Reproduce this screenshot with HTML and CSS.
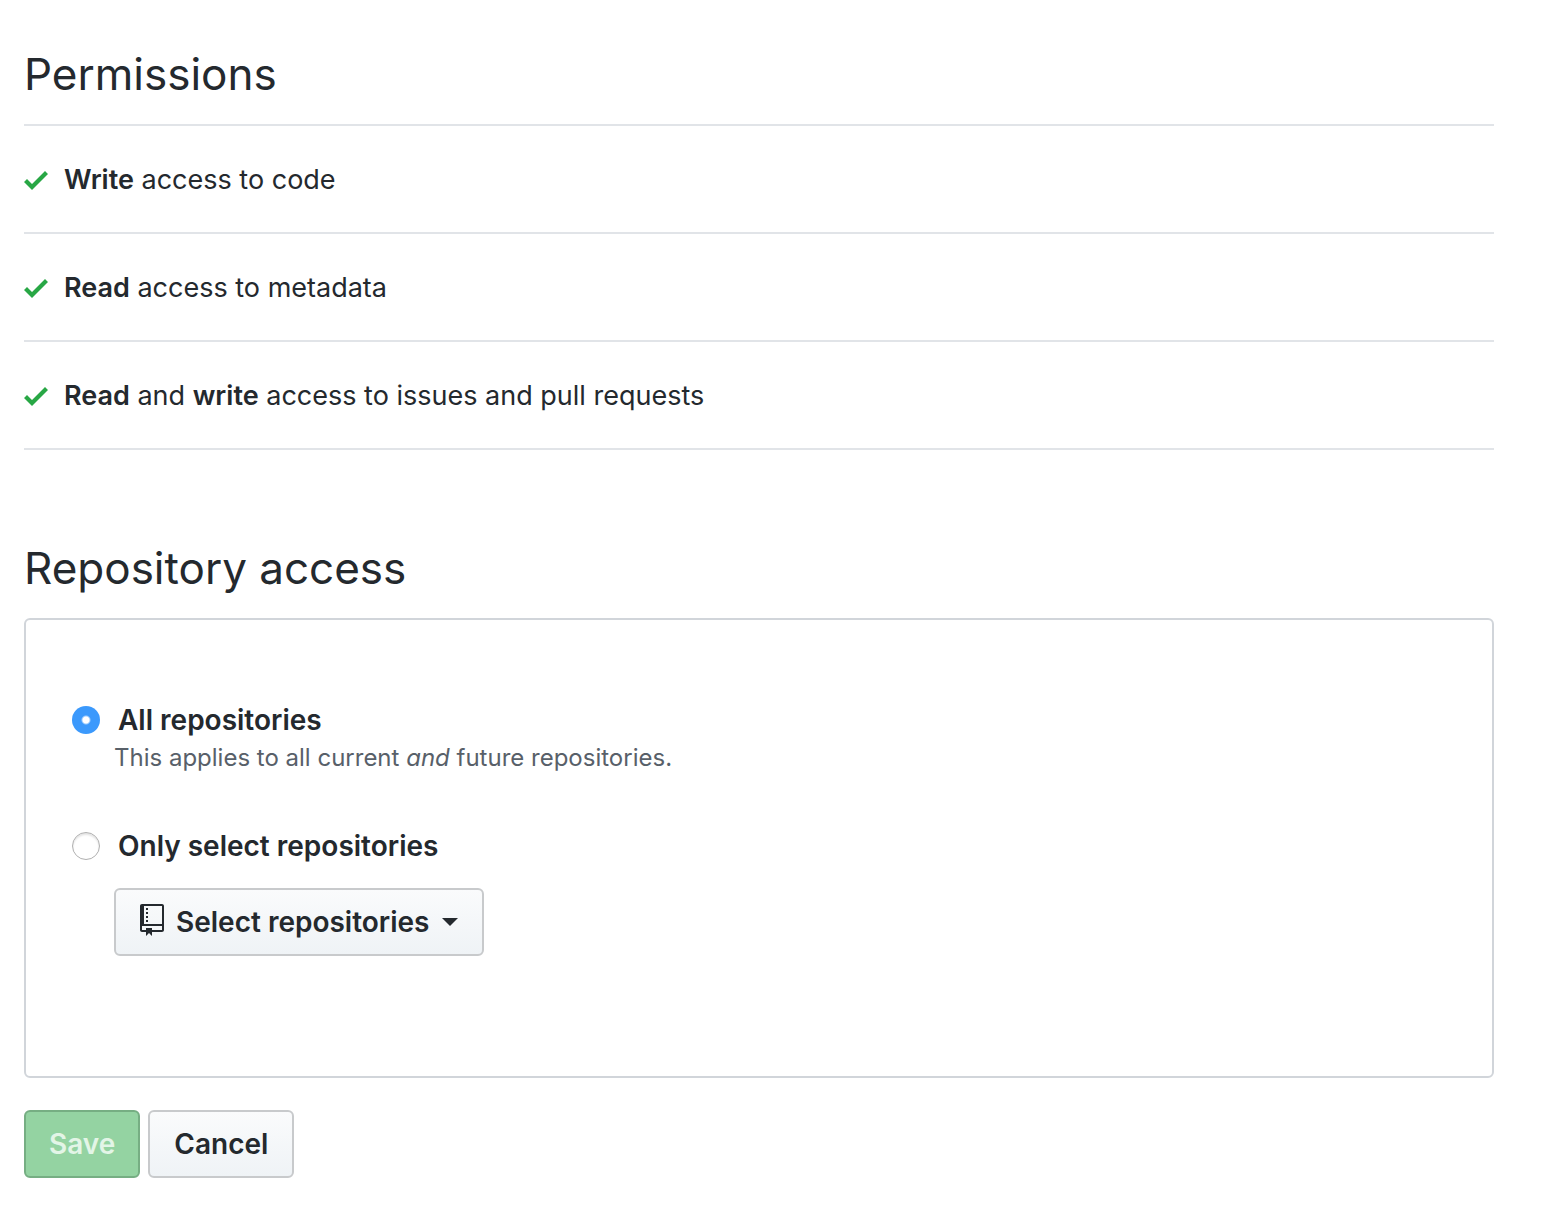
FILE: index.html
```html
<!DOCTYPE html>
<html lang="en">

<head>
    <meta charset="UTF-8">
    <meta name="viewport" content="width=device-width, initial-scale=1">
    <title>Permissions</title>
    <link rel="stylesheet" href="styles.css">
</head>

<body>
    <main class="settings">
        <section class="permissions">
            <h2 class="heading">Permissions</h2>
            <ul class="permission-list">
                <li class="permission">
                    <svg class="check" viewBox="0 0 12 16" aria-hidden="true"><path d="M12 5l-8 8-4-4 1.5-1.5L4 10l6.5-6.5L12 5z"/></svg>
                    <span><strong>Write</strong> access to code</span>
                </li>
                <li class="permission">
                    <svg class="check" viewBox="0 0 12 16" aria-hidden="true"><path d="M12 5l-8 8-4-4 1.5-1.5L4 10l6.5-6.5L12 5z"/></svg>
                    <span><strong>Read</strong> access to metadata</span>
                </li>
                <li class="permission">
                    <svg class="check" viewBox="0 0 12 16" aria-hidden="true"><path d="M12 5l-8 8-4-4 1.5-1.5L4 10l6.5-6.5L12 5z"/></svg>
                    <span><strong>Read</strong> and <strong>write</strong> access to issues and pull requests</span>
                </li>
            </ul>
        </section>

        <form>
            <h2 class="heading">Repository access</h2>
            <div class="box">
                <div class="option">
                    <div class="option-row">
                        <input type="radio" id="all" name="access" value="all" checked>
                        <label for="all">All repositories</label>
                    </div>
                    <p class="note">This applies to all current <em>and</em> future repositories.</p>
                </div>
                <div class="option">
                    <div class="option-row">
                        <input type="radio" id="selected" name="access" value="selected">
                        <label for="selected">Only select repositories</label>
                    </div>
                    <button type="button" class="btn btn-select" aria-haspopup="true">
                        <svg class="repo" viewBox="0 0 12 16" aria-hidden="true"><path d="M4 9H3V8h1v1zm0-3H3v1h1V6zm0-2H3v1h1V4zm0-2H3v1h1V2zm8-1v12c0 .55-.45 1-1 1H6v2l-1.5-1.5L3 16v-2H1c-.55 0-1-.45-1-1V1c0-.55.45-1 1-1h10c.55 0 1 .45 1 1zm-1 10H1v2h2v-1h3v1h5v-2zm0-10H2v9h9V1z"/></svg>
                        <span>Select repositories</span>
                        <span class="caret"></span>
                    </button>
                </div>
            </div>
            <div class="actions">
                <button type="submit" class="btn btn-save" disabled>Save</button>
                <button type="button" class="btn">Cancel</button>
            </div>
        </form>
    </main>
</body>

</html>
```

FILE: styles.css
```css
* {
    box-sizing: border-box;
}

body {
    margin: 0;
    background: #fff;
    color: #24292e;
    font-family: Inter, "Liberation Sans", sans-serif;
    font-size: 28px;
    line-height: 42px;
}

strong {
    font-weight: 600;
}

.settings {
    padding: 44px 68px 48px 24px;
}

.heading {
    margin: 0;
    padding-bottom: 20px;
    font-size: 44px;
    font-weight: 400;
    line-height: 60px;
}

.permissions {
    margin-bottom: 88px;
}

.permission-list {
    margin: 0;
    padding: 0;
    border-top: 2px solid #e1e4e8;
    font-size: 27px;
    list-style: none;
}

.permission {
    display: flex;
    align-items: center;
    gap: 16px;
    padding: 33px 0 31px;
    border-bottom: 2px solid #e1e4e8;
}

.check {
    flex: none;
    width: 24px;
    height: 32px;
    fill: #28a745;
}

.box {
    display: flex;
    flex-direction: column;
    gap: 50px;
    padding: 79px 46px 120px;
    border: 2px solid #d1d5da;
    border-radius: 6px;
}

.option-row {
    display: flex;
    align-items: center;
    gap: 18px;
    font-weight: 600;
}

.option-row input {
    appearance: none;
    width: 28px;
    height: 28px;
    margin: 0;
    border: 1px solid #b0b0b0;
    border-radius: 50%;
    background: #fff;
    box-shadow: inset 0 2px 2px #e4e4e4;
}

.option-row input:checked {
    border: 0;
    background: radial-gradient(circle, #fff 3px, #3b99fc 5px);
    box-shadow: none;
}

.note {
    margin: 0 0 0 42px;
    color: #586069;
    font-size: 24px;
    line-height: 34px;
}

.btn {
    display: inline-flex;
    align-items: center;
    padding: 10px 24px;
    border: 2px solid #c8cacc;
    border-radius: 6px;
    background: linear-gradient(#fafbfc, #eff3f6);
    color: #24292e;
    font-family: inherit;
    font-size: 28px;
    font-weight: 600;
    line-height: 44px;
}

.btn-select {
    margin: 21px 0 0 42px;
}

.repo {
    width: 24px;
    height: 32px;
    margin: 0 12px 4px 0;
    fill: currentColor;
}

.caret {
    margin-left: 12px;
    border: 8px solid transparent;
    border-top-color: #24292e;
    border-bottom: 0;
}

.actions {
    display: flex;
    gap: 8px;
    margin-top: 32px;
}

.btn-save {
    padding: 10px 23px;
    border-color: #76ae83;
    background: #94d3a2;
    color: #e3f5e7;
}
```
